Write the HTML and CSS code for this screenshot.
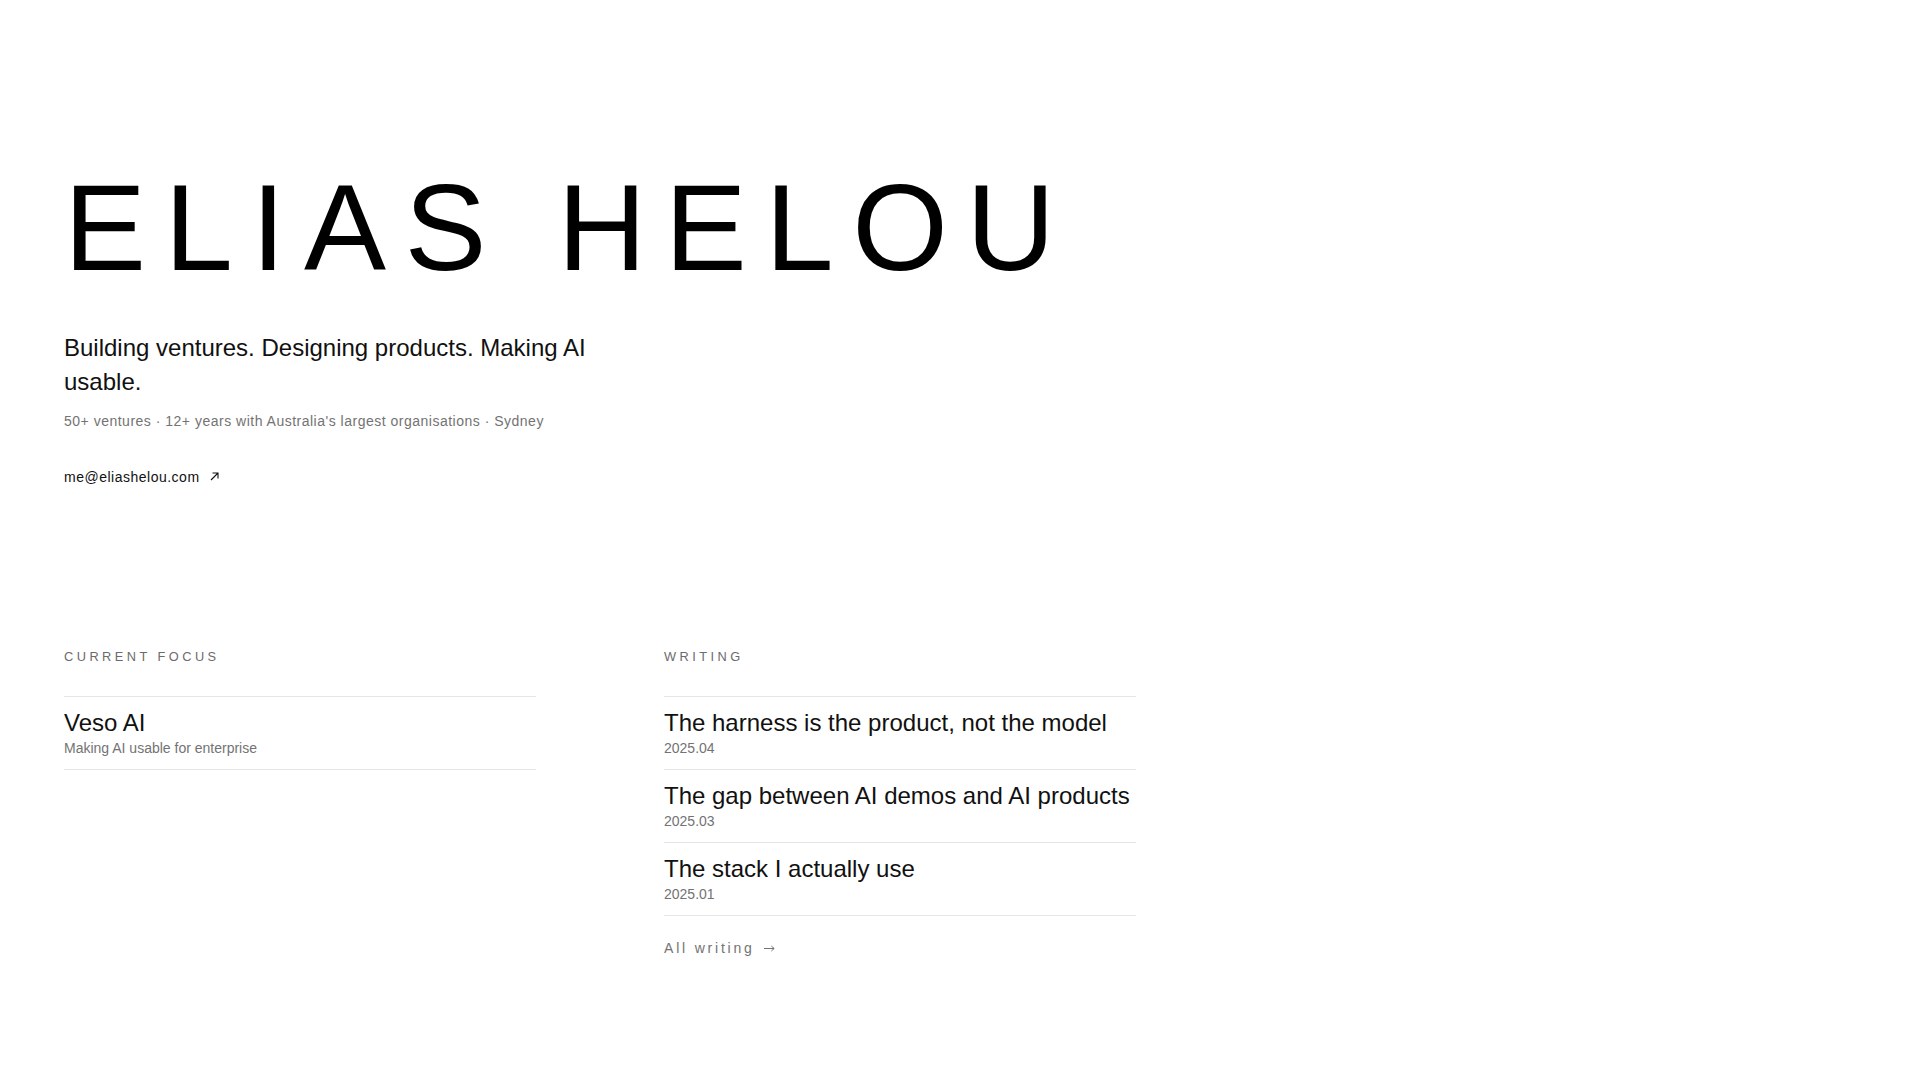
FILE: index.html
```html
<!DOCTYPE html>
<html lang="en">
<head>
<meta charset="utf-8">
<title>Elias Helou</title>
<link rel="stylesheet" href="styles.css">
</head>
<body>
<main class="page">
  <header class="hero">
    <h1 class="name">ELIAS HELOU</h1>
    <p class="tagline">Building ventures. Designing products. Making AI usable.</p>
    <p class="meta">50+ ventures · 12+ years with Australia's largest organisations · Sydney</p>
    <p class="contact">
      <a class="email" href="mailto:me@eliashelou.com">me@eliashelou.com<svg class="ext" width="9" height="9" viewBox="0 0 9 9" aria-hidden="true"><path d="M1 8 L8 1 M2.5 1 H8 V6.5" fill="none" stroke="currentColor" stroke-width="1.1"/></svg></a>
    </p>
  </header>

  <div class="columns">
    <section class="col">
      <h2 class="label">CURRENT FOCUS</h2>
      <ul class="list">
        <li class="item">
          <div class="item-title">Veso AI</div>
          <div class="item-sub">Making AI usable for enterprise</div>
        </li>
      </ul>
    </section>

    <section class="col">
      <h2 class="label">WRITING</h2>
      <ul class="list">
        <li class="item">
          <div class="item-title">The harness is the product, not the model</div>
          <div class="item-sub">2025.04</div>
        </li>
        <li class="item">
          <div class="item-title">The gap between AI demos and AI products</div>
          <div class="item-sub">2025.03</div>
        </li>
        <li class="item">
          <div class="item-title">The stack I actually use</div>
          <div class="item-sub">2025.01</div>
        </li>
      </ul>
      <a class="all" href="#">All writing<svg class="arrow" width="11" height="7" viewBox="0 0 11 7" aria-hidden="true"><path d="M0 3.5 H10 M7.3 1 L10.2 3.5 L7.3 6" fill="none" stroke="currentColor" stroke-width="1"/></svg></a>
    </section>
  </div>
</main>
</body>
</html>
```

FILE: styles.css
```css
html, body {
  margin: 0;
  padding: 0;
  background: #ffffff;
}

body {
  font-family: "Liberation Sans", Arial, sans-serif;
  color: #111111;
}

.page {
  box-sizing: border-box;
  width: 1200px;
  padding: 166px 64px 0;
}

.name {
  margin: 0;
  font-size: 123px;
  line-height: 1;
  font-weight: 400;
  letter-spacing: 0.15em;
  color: #000000;
}

.tagline {
  margin: 42px 0 0;
  max-width: 560px;
  font-size: 24px;
  line-height: 1.4;
  color: #111111;
}

.meta {
  margin: 13px 0 0;
  font-size: 14px;
  line-height: 1.5;
  letter-spacing: 0.5px;
  color: #737373;
}

.contact {
  margin: 35px 0 0;
  font-size: 14px;
  line-height: 1.5;
}

.email {
  display: inline-flex;
  align-items: center;
  gap: 10px;
  color: #111111;
  text-decoration: none;
  letter-spacing: 0.5px;
}

.ext {
  display: block;
  margin-top: -3px;
}

.columns {
  display: grid;
  grid-template-columns: 1fr 1fr;
  column-gap: 128px;
  margin-top: 159px;
}

.label {
  margin: 0 0 30px;
  font-size: 12.8px;
  line-height: 1.5;
  font-weight: 400;
  letter-spacing: 0.27em;
  color: #6b6b6b;
}

.list {
  list-style: none;
  margin: 0;
  padding: 0;
  border-top: 1px solid #e5e5e5;
}

.item {
  padding: 10px 0;
  border-bottom: 1px solid #e5e5e5;
}

.item-title {
  font-size: 24px;
  line-height: 31px;
  color: #111111;
}

.item-sub {
  font-size: 14px;
  line-height: 1.5;
  color: #737373;
}

.all {
  display: inline-flex;
  align-items: center;
  gap: 9px;
  margin-top: 22px;
  font-size: 14px;
  line-height: 1.5;
  letter-spacing: 0.2em;
  color: #737373;
  text-decoration: none;
}

.arrow {
  display: block;
  margin-top: -1px;
}
```
